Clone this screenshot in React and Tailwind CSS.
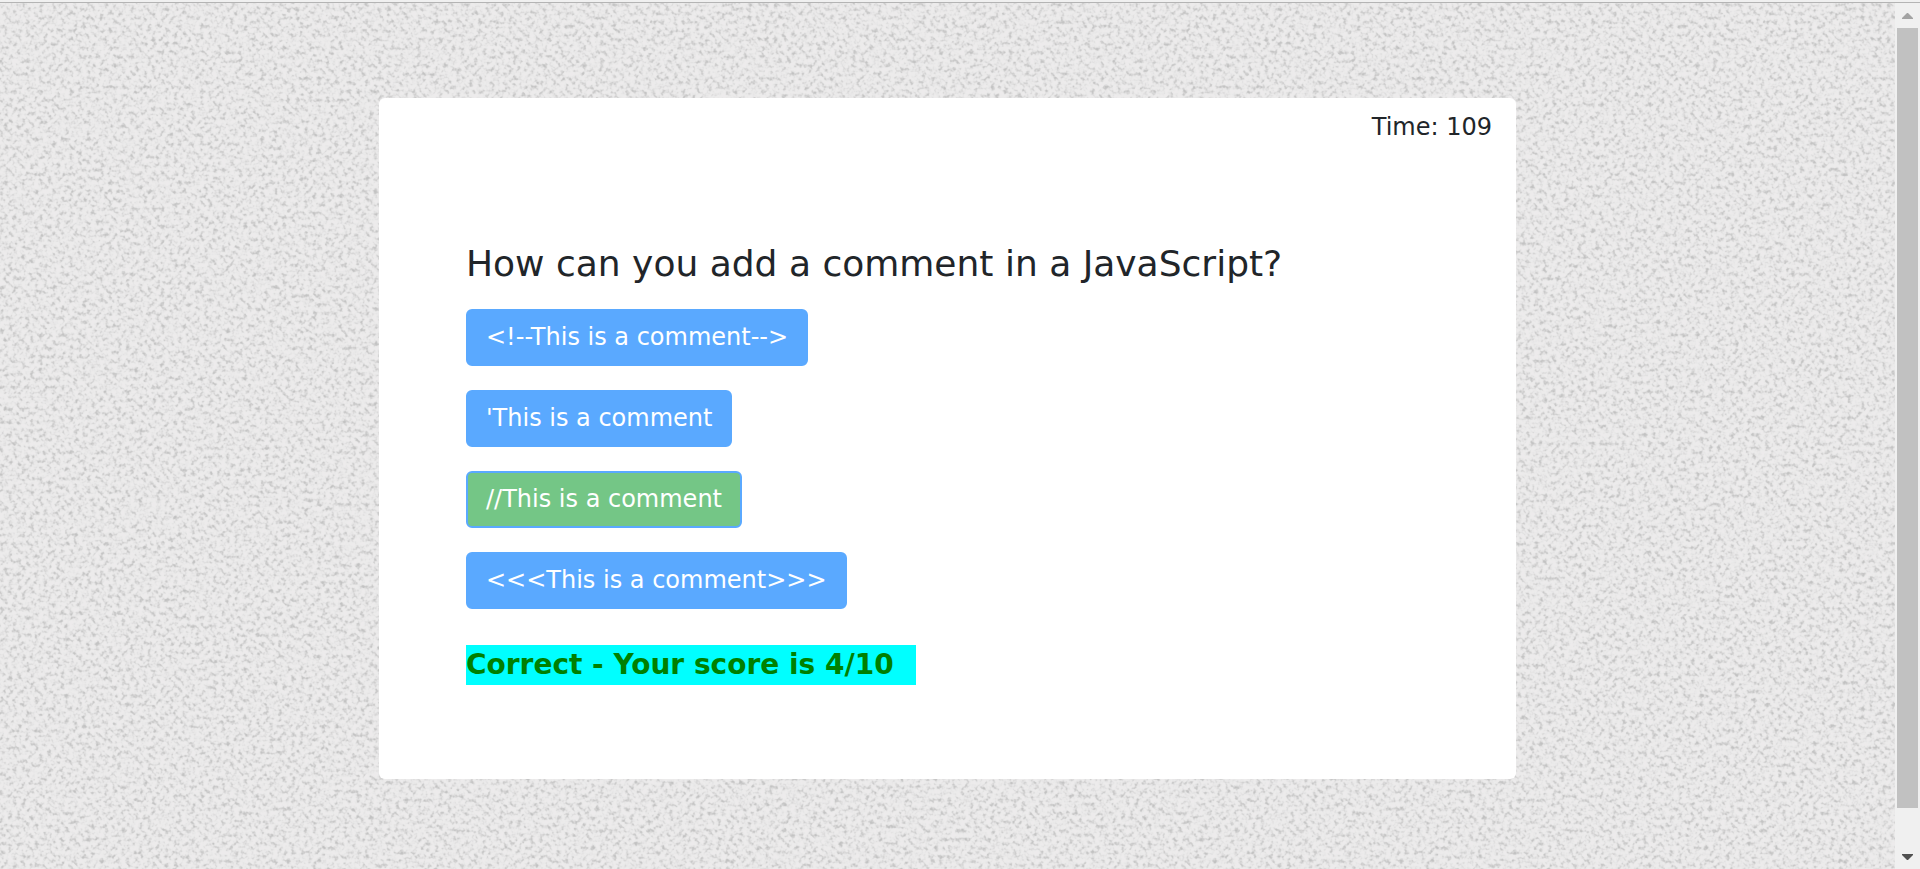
const answers = [
  { text: "<!--This is a comment-->", correct: false },
  { text: "'This is a comment", correct: false },
  { text: "//This is a comment", correct: true },
  { text: "<<<This is a comment>>>", correct: false },
];

function StoneTexture() {
  return (
    <svg className="absolute inset-0 h-full w-full" aria-hidden="true">
      <filter id="stone" x="0" y="0" width="100%" height="100%" colorInterpolationFilters="sRGB">
        <feTurbulence type="fractalNoise" baseFrequency="0.23" numOctaves="2" seed="7" />
        <feColorMatrix values="1 0 0 0 0  1 0 0 0 0  1 0 0 0 0  0 0 0 0 1" />
        <feComponentTransfer>
          <feFuncR type="table" tableValues="0.76 0.76 0.775 0.82 0.875 0.912 0.925 0.93 0.93 0.93 0.93" />
          <feFuncG type="table" tableValues="0.76 0.76 0.775 0.818 0.872 0.909 0.922 0.925 0.925 0.925 0.925" />
          <feFuncB type="table" tableValues="0.76 0.76 0.775 0.818 0.873 0.91 0.922 0.926 0.926 0.926 0.926" />
        </feComponentTransfer>
      </filter>
      <rect width="100%" height="100%" filter="url(#stone)" />
    </svg>
  );
}

function ScrollRail() {
  return (
    <div className="flex w-[25px] shrink-0 flex-col items-center bg-[#f0f0f0]" aria-hidden="true">
      <svg className="h-[25px] w-[25px] shrink-0" viewBox="0 0 25 25">
        <path d="M7 16h11v-1l-5-5h-1l-5 5z" fill="#a3a3a3" />
      </svg>
      <div className="w-[21px] flex-1 bg-[#c1c1c1]" />
      <div className="h-[36px] shrink-0" />
      <svg className="h-[25px] w-[25px] shrink-0" viewBox="0 0 25 25">
        <path d="M7 10h11v1l-5 5h-1l-5-5z" fill="#505050" />
      </svg>
    </div>
  );
}

export default function App() {
  return (
    <div className="flex h-screen flex-col bg-[#ebebeb] font-['Verdana','DejaVu_Sans',sans-serif] text-[#212529]">
      <div className="h-[3px] shrink-0 border-b border-[#b4b4b4] bg-[#f0f0f0]" />
      <div className="flex min-h-0 flex-1">
        <main className="relative min-w-0 flex-1 overflow-hidden">
          <StoneTexture />
          <section className="relative mx-auto mt-[95px] w-3/5 rounded-md bg-white px-6 pt-[11px] pb-[94px]">
            <p className="text-right text-[24px] leading-9">Time: 109</p>
            <div className="px-[63px] pt-[92px]">
              <h1 className="text-[36px] leading-[54px]">How can you add a comment in a JavaScript?</h1>
              <div className="mt-[18px] flex flex-col items-start gap-6">
                {answers.map(({ text, correct }) => (
                  <button
                    key={text}
                    type="button"
                    className={`rounded-md border-2 border-[#5aa9ff] px-[18px] py-2 text-[24px] leading-[37px] text-white ${
                      correct ? "bg-[#74c686]" : "bg-[#5aa9ff]"
                    }`}
                  >
                    {text}
                  </button>
                ))}
              </div>
              <p className="mt-9 w-[450px] bg-[#00ffff] text-[28px] leading-10 font-bold whitespace-nowrap text-[#008000]">
                Correct - Your score is 4/10
              </p>
            </div>
          </section>
        </main>
        <ScrollRail />
      </div>
    </div>
  );
}
